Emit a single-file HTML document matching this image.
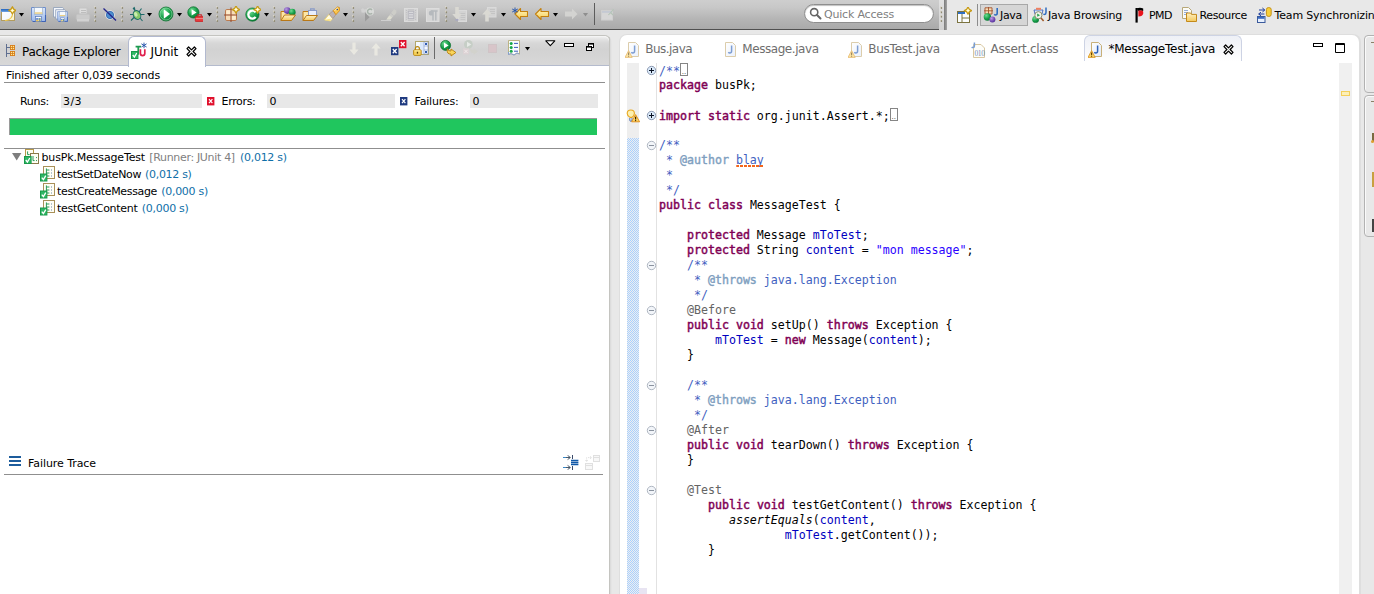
<!DOCTYPE html>
<html lang="en"><head><meta charset="utf-8"><title>Java - Eclipse</title>
<style>
html,body{margin:0;padding:0}
body{width:1374px;height:594px;overflow:hidden;background:#e8e8e8;position:relative;font-family:"DejaVu Sans","Liberation Sans",sans-serif;font-size:11px;color:#000;-webkit-font-smoothing:antialiased}
div,span,svg{position:absolute;box-sizing:border-box}
.t{white-space:pre;line-height:14px;height:14px}
.t12{font-size:12px}
.code{font-family:"DejaVu Sans Mono","Liberation Mono",monospace;font-size:11.627px;line-height:15px;height:15px;white-space:pre;left:659px;color:#000}
.code span{position:static}
.t span{position:static}
.k{color:#7f0055;-webkit-text-stroke:.45px #7f0055}
.c{color:#3f5fbf}
.g{color:#7f9fbf;-webkit-text-stroke:.4px #7f9fbf}
.f{color:#0000c0}
.s{color:#2a00ff}
.a{color:#646464}
.i{font-style:italic}
.sep{width:2px;height:15px;top:7px;background:linear-gradient(to right,#9c927a 0,#9c927a 1px,#d9d5c8 1px,#d9d5c8 2px);-webkit-mask:repeating-linear-gradient(to bottom,#000 0,#000 2px,transparent 2px,transparent 4px);mask:repeating-linear-gradient(to bottom,#000 0,#000 2px,transparent 2px,transparent 4px)}
.dd{width:0;height:0;border-left:3px solid transparent;border-right:3px solid transparent;border-top:4px solid #000;top:13px}
</style></head>
<body>
<!-- main toolbar -->
<div style="left:0px;top:0px;width:939px;height:30px;background:linear-gradient(to bottom,#cecece 0,#c8c8c8 25%,#b5b5b5 65%,#aaaaaa 100%);border-bottom:1px solid #505050"></div>
<div style="left:939px;top:0px;width:5px;height:30px;background:linear-gradient(to bottom,#e2e2e2,#d2d2d2)"></div>
<div style="left:944px;top:0px;width:3px;height:30px;background:linear-gradient(to right,#7a7a7a,#a6a6a6)"></div>
<svg width="0" height="0" style="left:0;top:0"><defs>
<linearGradient id="gGreen" x1="0" y1="0" x2="0" y2="1"><stop offset="0" stop-color="#3fc26a"/><stop offset="1" stop-color="#0a7d33"/></linearGradient>
<radialGradient id="gBall" cx=".35" cy=".3" r=".8"><stop offset="0" stop-color="#6fdc92"/><stop offset=".55" stop-color="#17a04a"/><stop offset="1" stop-color="#067230"/></radialGradient>
<radialGradient id="gBallP" cx=".35" cy=".3" r=".8"><stop offset="0" stop-color="#b89ce2"/><stop offset=".55" stop-color="#7a50b8"/><stop offset="1" stop-color="#4a2a90"/></radialGradient>
<linearGradient id="gFolder" x1="0" y1="0" x2="0" y2="1"><stop offset="0" stop-color="#fff2c4"/><stop offset="1" stop-color="#f3c85c"/></linearGradient>
<linearGradient id="gYel" x1="0" y1="0" x2="0" y2="1"><stop offset="0" stop-color="#fff6c8"/><stop offset="1" stop-color="#f7cf50"/></linearGradient>
<linearGradient id="gFloppy" x1="0" y1="0" x2="0" y2="1"><stop offset="0" stop-color="#dbe7fa"/><stop offset="1" stop-color="#9db9ea"/></linearGradient>
<linearGradient id="gWin" x1="0" y1="0" x2="1" y2="1"><stop offset="0" stop-color="#ffffff"/><stop offset=".6" stop-color="#f4f8ff"/><stop offset="1" stop-color="#fff1b0"/></linearGradient>
<linearGradient id="gJfile" x1="0" y1="0" x2="1" y2="1"><stop offset="0" stop-color="#ffffff"/><stop offset="1" stop-color="#dfe9fb"/></linearGradient>
</defs></svg>
<svg style="left:0px;top:6px" width="16" height="16" viewBox="0 0 16 16"><rect x="1.5" y="3.5" width="13" height="11" fill="url(#gWin)" stroke="#b39c5e"/><rect x="1" y="3" width="9.6" height="2.8" fill="#2f6fc4"/><rect x="1" y="4.6" width="9.6" height="1.2" fill="#6aa0e0"/><path d="M12.6 6 C13 11 10 14 5 14.6" fill="none" stroke="#ecc850" stroke-width="1.1"/><path d="M12.40 0.80 L13.70 3.10 L16.00 4.40 L13.70 5.70 L12.40 8.00 L11.10 5.70 L8.80 4.40 L11.10 3.10 Z" fill="#fff6b0" stroke="#c79a18" stroke-width="1.3" stroke-linejoin="round"/><circle cx="12.4" cy="4.4" r="1" fill="#fffce8"/></svg>
<svg style="left:19px;top:13px" width="5" height="4" viewBox="0 0 5 4"><path d="M0 0 H5 L2.5 3.6 Z" fill="#000"/></svg>
<svg style="left:31px;top:7px" width="16" height="16" viewBox="0 0 16 16"><g transform="translate(0 0) scale(1)"><path d="M.5 .5 H14.5 V14.5 H2 L.5 13 Z" fill="url(#gFloppy)" stroke="#6f8ecb"/><path d="M1.6 14.5 H14.6 M14.5 8 V14.5" stroke="#3f63b5" stroke-width="1.1" fill="none"/><rect x="3.3" y=".7" width="8.4" height="6.5" fill="#f5f9fe" stroke="#8da3bb" stroke-width=".6"/><rect x="3.7" y="5.3" width="7.6" height="1.5" fill="#ecd084"/><rect x="4.6" y="9.4" width="5.8" height="5" fill="#fbfcff" stroke="#5877b9" stroke-width=".7"/><rect x="5.1" y="11.2" width="2.5" height="1.6" fill="#4c7bcb"/><rect x="5.1" y="12.8" width="2.5" height="1.6" fill="#e9c152"/><rect x="8.1" y="11" width="1.5" height="3.4" fill="#7c9b7a"/></g></svg>
<svg style="left:53px;top:7px" width="16" height="16" viewBox="0 0 16 16"><path d="M.5 .5 H9.6 L10.4 1.4 V10 H.5 Z" fill="#f4f7fc" stroke="#8c9cb6" stroke-width=".8"/><path d="M2.7 2.7 H11.8 L12.6 3.6 V12 H2.7 Z" fill="#f4f7fc" stroke="#8c9cb6" stroke-width=".8"/><g transform="translate(4.3 4.3) scale(0.7)"><path d="M.5 .5 H14.5 V14.5 H2 L.5 13 Z" fill="url(#gFloppy)" stroke="#6f8ecb"/><path d="M1.6 14.5 H14.6 M14.5 8 V14.5" stroke="#3f63b5" stroke-width="1.1" fill="none"/><rect x="3.3" y=".7" width="8.4" height="6.5" fill="#f5f9fe" stroke="#8da3bb" stroke-width=".6"/><rect x="3.7" y="5.3" width="7.6" height="1.5" fill="#ecd084"/><rect x="4.6" y="9.4" width="5.8" height="5" fill="#fbfcff" stroke="#5877b9" stroke-width=".7"/><rect x="5.1" y="11.2" width="2.5" height="1.6" fill="#4c7bcb"/><rect x="5.1" y="12.8" width="2.5" height="1.6" fill="#e9c152"/><rect x="8.1" y="11" width="1.5" height="3.4" fill="#7c9b7a"/></g></svg>
<svg style="left:75px;top:7px" width="16" height="16" viewBox="0 0 16 16"><g opacity=".8"><rect x="4" y="1" width="8" height="7" fill="#e4e4e4" stroke="#c4c4c4"/><rect x="1" y="7" width="14" height="6" rx="1" fill="#d0d0d0" stroke="#bcbcbc"/><rect x="2" y="12" width="12" height="2.5" fill="#dadada"/><path d="M6 3.5h5M6 5.5h5" stroke="#bdbdbd"/></g></svg>
<svg style="left:94px;top:6px" width="3" height="17" viewBox="0 0 3 17"><rect x="0" y="0.20" width="1.3" height="1.7" fill="#dcd8ca"/><rect x=".8" y="1.10" width="1.3" height="1.8" fill="#8f8a72"/><rect x="0" y="4.55" width="1.3" height="1.7" fill="#dcd8ca"/><rect x=".8" y="5.45" width="1.3" height="1.8" fill="#8f8a72"/><rect x="0" y="8.90" width="1.3" height="1.7" fill="#dcd8ca"/><rect x=".8" y="9.80" width="1.3" height="1.8" fill="#8f8a72"/><rect x="0" y="13.25" width="1.3" height="1.7" fill="#dcd8ca"/><rect x=".8" y="14.15" width="1.3" height="1.8" fill="#8f8a72"/></svg>
<svg style="left:102px;top:7px" width="16" height="16" viewBox="0 0 16 16"><circle cx="8" cy="8" r="4.6" fill="#fff"/><circle cx="8" cy="8" r="3.7" fill="#4e8fd0" stroke="#2c62a8" stroke-width=".8"/><path d="M1.5 1.5 L14 13.5" stroke="#23238a" stroke-width="1.3"/></svg>
<svg style="left:121px;top:6px" width="3" height="17" viewBox="0 0 3 17"><rect x="0" y="0.20" width="1.3" height="1.7" fill="#dcd8ca"/><rect x=".8" y="1.10" width="1.3" height="1.8" fill="#8f8a72"/><rect x="0" y="4.55" width="1.3" height="1.7" fill="#dcd8ca"/><rect x=".8" y="5.45" width="1.3" height="1.8" fill="#8f8a72"/><rect x="0" y="8.90" width="1.3" height="1.7" fill="#dcd8ca"/><rect x=".8" y="9.80" width="1.3" height="1.8" fill="#8f8a72"/><rect x="0" y="13.25" width="1.3" height="1.7" fill="#dcd8ca"/><rect x=".8" y="14.15" width="1.3" height="1.8" fill="#8f8a72"/></svg>
<svg style="left:129px;top:6px" width="16" height="16" viewBox="0 0 16 16"><g stroke="#1d6a6a" stroke-width="1.1" fill="none"><path d="M4 2 L7 6 M12.5 2.5 L10 6 M1 8.5 L5 8.5 M11 8.5 L15.5 8.5 M2 14.5 L5.5 11 M13.5 15 L10.5 11.5 M5 1 L6 4"/></g><ellipse cx="8" cy="9" rx="3.6" ry="4.6" fill="#86c96a" stroke="#1d6a6a" transform="rotate(-25 8 9)"/><ellipse cx="7.2" cy="8" rx="1.6" ry="2.4" fill="#c8ecb0" transform="rotate(-25 8 9)"/></svg>
<svg style="left:147px;top:13px" width="5" height="4" viewBox="0 0 5 4"><path d="M0 0 H5 L2.5 3.6 Z" fill="#000"/></svg>
<svg style="left:158px;top:6px" width="16" height="16" viewBox="0 0 16 16"><circle cx="8" cy="8" r="7" fill="url(#gBall)" stroke="#0a6e2c" stroke-width=".8"/><circle cx="8" cy="8" r="6" fill="none" stroke="#a8eabc" stroke-width=".7" opacity=".8"/><path d="M5.8 3.2 L12 8 L5.8 12.8 Z" fill="#fff"/></svg>
<svg style="left:177px;top:13px" width="5" height="4" viewBox="0 0 5 4"><path d="M0 0 H5 L2.5 3.6 Z" fill="#000"/></svg>
<svg style="left:187px;top:6px" width="16" height="16" viewBox="0 0 16 16"><circle cx="6.4" cy="6.4" r="5.6" fill="url(#gBall)" stroke="#0a6e2c" stroke-width=".8"/><path d="M4.6 3.2 L9.6 6.4 L4.6 9.6 Z" fill="#fff"/><rect x="8.3" y="10.3" width="8.4" height="5.4" rx="1" fill="#e8383a" stroke="#b81e22" stroke-width=".7"/><path d="M10.7 10.2 v-1.4 h3.6 v1.4" fill="none" stroke="#c42a2c" stroke-width="1.1"/><path d="M8.6 12.6 h7.8" stroke="#f6a0a0" stroke-width=".8"/></svg>
<svg style="left:207px;top:13px" width="5" height="4" viewBox="0 0 5 4"><path d="M0 0 H5 L2.5 3.6 Z" fill="#000"/></svg>
<svg style="left:216px;top:6px" width="3" height="17" viewBox="0 0 3 17"><rect x="0" y="0.20" width="1.3" height="1.7" fill="#dcd8ca"/><rect x=".8" y="1.10" width="1.3" height="1.8" fill="#8f8a72"/><rect x="0" y="4.55" width="1.3" height="1.7" fill="#dcd8ca"/><rect x=".8" y="5.45" width="1.3" height="1.8" fill="#8f8a72"/><rect x="0" y="8.90" width="1.3" height="1.7" fill="#dcd8ca"/><rect x=".8" y="9.80" width="1.3" height="1.8" fill="#8f8a72"/><rect x="0" y="13.25" width="1.3" height="1.7" fill="#dcd8ca"/><rect x=".8" y="14.15" width="1.3" height="1.8" fill="#8f8a72"/></svg>
<svg style="left:224px;top:6px" width="16" height="16" viewBox="0 0 16 16"><rect x="1.5" y="3.5" width="11" height="11" rx="1.4" fill="#f6dcb8" stroke="#bc7c50"/><path d="M7 1.5 V16 M0 9 H13" stroke="#94482c" stroke-width="1"/><rect x="2.4" y="4.4" width="3.6" height="3.6" fill="#fdeccc"/><rect x="8" y="10" width="3.6" height="3.6" fill="#fdeccc"/><path d="M12.00 0.00 L13.30 2.30 L15.60 3.60 L13.30 4.90 L12.00 7.20 L10.70 4.90 L8.40 3.60 L10.70 2.30 Z" fill="#fff6b0" stroke="#c79a18" stroke-width="1.3" stroke-linejoin="round"/><circle cx="12" cy="3.6" r="1" fill="#fffce8"/></svg>
<svg style="left:245px;top:6px" width="16" height="16" viewBox="0 0 16 16"><circle cx="7.4" cy="8.6" r="6.7" fill="url(#gBall)" stroke="#0a6e2c" stroke-width=".6"/><path d="M10.6 6.3 A4 4 0 1 0 10.6 10.9" fill="none" stroke="#fff" stroke-width="2.3"/><path d="M12.60 0.00 L13.90 2.30 L16.20 3.60 L13.90 4.90 L12.60 7.20 L11.30 4.90 L9.00 3.60 L11.30 2.30 Z" fill="#fff6b0" stroke="#c79a18" stroke-width="1.3" stroke-linejoin="round"/><circle cx="12.6" cy="3.6" r="1" fill="#fffce8"/></svg>
<svg style="left:264px;top:13px" width="5" height="4" viewBox="0 0 5 4"><path d="M0 0 H5 L2.5 3.6 Z" fill="#000"/></svg>
<svg style="left:273px;top:6px" width="3" height="17" viewBox="0 0 3 17"><rect x="0" y="0.20" width="1.3" height="1.7" fill="#dcd8ca"/><rect x=".8" y="1.10" width="1.3" height="1.8" fill="#8f8a72"/><rect x="0" y="4.55" width="1.3" height="1.7" fill="#dcd8ca"/><rect x=".8" y="5.45" width="1.3" height="1.8" fill="#8f8a72"/><rect x="0" y="8.90" width="1.3" height="1.7" fill="#dcd8ca"/><rect x=".8" y="9.80" width="1.3" height="1.8" fill="#8f8a72"/><rect x="0" y="13.25" width="1.3" height="1.7" fill="#dcd8ca"/><rect x=".8" y="14.15" width="1.3" height="1.8" fill="#8f8a72"/></svg>
<svg style="left:280px;top:6px" width="16" height="16" viewBox="0 0 16 16"><path d="M1 5.5 H6 L7 7 H11 V14.5 H1 Z" fill="#fbe6a6" stroke="#c27c14"/><circle cx="7.2" cy="4.6" r="3.3" fill="url(#gBallP)"/><circle cx="12.2" cy="6.2" r="3.4" fill="url(#gBall)"/><path d="M1 14.5 L4.5 9 H15.5 L11.5 14.5 Z" fill="url(#gFolder)" stroke="#b87818"/></svg>
<svg style="left:302px;top:6px" width="16" height="16" viewBox="0 0 16 16"><path d="M1 5.5 H6 L7 7 H11 V14.5 H1 Z" fill="#fbe6a6" stroke="#c27c14"/><rect x="6.5" y="4.5" width="8" height="6" fill="#e8eefc" stroke="#8a9cc8"/><path d="M8.6 4.4 v-1.6 h3.6 v1.6" fill="none" stroke="#8a9cc8" stroke-width="1.2"/><path d="M1 14.5 L4.5 9.5 H15.5 L11.5 14.5 Z" fill="url(#gFolder)" stroke="#b87818"/></svg>
<svg style="left:324px;top:6px" width="16" height="16" viewBox="0 0 16 16"><path d="M5.2 8.2 L8.8 12.6 L6.4 14.9 L.5 13.9 Z" fill="#fffbe2" stroke="#f5d766" stroke-width=".8" stroke-linejoin="round"/><path d="M1.6 13.6 L6 14.4 L7.6 12.6 Z" fill="#fbe588"/><path d="M5.2 8.2 L9.2 4.6 L11.9 8.6 L8.8 12.6 Z" fill="#bab2b6" stroke="#a08c7c" stroke-width=".6" stroke-linejoin="round"/><path d="M9.2 4.6 L13.6 .9 L15.6 1.7 L15.5 4.7 L11.9 8.6 Z" fill="#f9c64e" stroke="#d98e1a" stroke-width=".9" stroke-linejoin="round"/><path d="M10.4 4.6 L13.8 1.8" stroke="#fde9a8" stroke-width="1.2"/><circle cx="13.3" cy="3.5" r=".8" fill="#27449c"/></svg>
<svg style="left:343px;top:13px" width="5" height="4" viewBox="0 0 5 4"><path d="M0 0 H5 L2.5 3.6 Z" fill="#000"/></svg>
<svg style="left:352px;top:6px" width="3" height="17" viewBox="0 0 3 17"><rect x="0" y="0.20" width="1.3" height="1.7" fill="#dcd8ca"/><rect x=".8" y="1.10" width="1.3" height="1.8" fill="#8f8a72"/><rect x="0" y="4.55" width="1.3" height="1.7" fill="#dcd8ca"/><rect x=".8" y="5.45" width="1.3" height="1.8" fill="#8f8a72"/><rect x="0" y="8.90" width="1.3" height="1.7" fill="#dcd8ca"/><rect x=".8" y="9.80" width="1.3" height="1.8" fill="#8f8a72"/><rect x="0" y="13.25" width="1.3" height="1.7" fill="#dcd8ca"/><rect x=".8" y="14.15" width="1.3" height="1.8" fill="#8f8a72"/></svg>
<svg style="left:360px;top:7px" width="16" height="16" viewBox="0 0 16 16"><path d="M1 2.6 L3 1 L4.4 2.4 L6.4 1.8 L6 4.4 L4 5.8 L1.6 5.4 Z" fill="#d2d2d2"/><circle cx="10" cy="4.6" r="4" fill="#d9dbd9"/><path d="M12 3 A2.5 2.5 0 1 0 12 6.2" fill="none" stroke="#a9b3ab" stroke-width="1.5"/><path d="M5 5.6 V14.6 L9.6 10.2 Z" fill="#9b9b9b"/></svg>
<svg style="left:381px;top:7px" width="16" height="16" viewBox="0 0 16 16"><path d="M0 13.5 H10" stroke="#cfcfcf"/><path d="M5.4 12.4 L13 2 L15.4 3.6 L15.4 6 L9.4 12.6 Z" fill="#cdcdc8"/><path d="M5.4 12.4 L8.4 8.4 L11 10.6 L9.4 12.6 Z" fill="#deddd0"/><path d="M10 6.4 L12.8 8.8" stroke="#bdbdbd" stroke-width=".8"/></svg>
<svg style="left:404px;top:7px" width="16" height="16" viewBox="0 0 16 16"><rect x=".5" y="1.5" width="13" height="13" fill="#d4d4d4" stroke="#dcdcdc"/><rect x="4.2" y="4.2" width="5.6" height="7.4" fill="#d9d9dc" stroke="#b3b3bb" stroke-width=".9"/><path d="M5 6.6 h4 M5 9 h4" stroke="#b3b3bb" stroke-width=".9"/><path d="M2.4 3v11M11.6 3v11" stroke="#bcbcc0" stroke-width="1" stroke-dasharray="1 1.2"/><path d="M4 2.8h6M4 13.2h6" stroke="#bcbcc0" stroke-width=".8"/></svg>
<svg style="left:425px;top:7px" width="16" height="16" viewBox="0 0 16 16"><rect x="1.5" y="1.5" width="12.5" height="13" fill="#d6d6d6" stroke="#dddddd"/><path d="M8 4 V13.4 M10.8 4 V13.4 M6 4 H12.6" stroke="#b5b9bd" stroke-width="1.5" fill="none"/><path d="M8 3.4 H6.4 Q3.8 3.4 3.8 6 Q3.8 8.6 6.4 8.6 H8 Z" fill="#b5b9bd"/></svg>
<svg style="left:445px;top:6px" width="3" height="17" viewBox="0 0 3 17"><rect x="0" y="0.20" width="1.3" height="1.7" fill="#dcd8ca"/><rect x=".8" y="1.10" width="1.3" height="1.8" fill="#8f8a72"/><rect x="0" y="4.55" width="1.3" height="1.7" fill="#dcd8ca"/><rect x=".8" y="5.45" width="1.3" height="1.8" fill="#8f8a72"/><rect x="0" y="8.90" width="1.3" height="1.7" fill="#dcd8ca"/><rect x=".8" y="9.80" width="1.3" height="1.8" fill="#8f8a72"/><rect x="0" y="13.25" width="1.3" height="1.7" fill="#dcd8ca"/><rect x=".8" y="14.15" width="1.3" height="1.8" fill="#8f8a72"/></svg>
<svg style="left:452px;top:6px" width="16" height="16" viewBox="0 0 16 16"><rect x="6.5" y="4.5" width="8" height="11" fill="#d3d3d3" stroke="#dadada"/><path d="M8.6 7.5h4.6M8.6 9.5h4.6M8.6 11.5h4.6M8.6 13.5h4.6" stroke="#c2c2c2" stroke-width=".9"/><path d="M3.2 1 H6.8 V8 H9.8 L5 13.4 L.2 8 H3.2 Z" fill="#dad9d3"/><rect x="3.4" y="13" width="3" height="1.8" fill="#a9a9c0"/></svg>
<svg style="left:471px;top:13px" width="5" height="4" viewBox="0 0 5 4"><path d="M0 0 H5 L2.5 3.6 Z" fill="#000"/></svg>
<svg style="left:482px;top:6px" width="16" height="16" viewBox="0 0 16 16"><rect x="5.5" y="1.5" width="8.5" height="9.5" fill="#d3d3d3" stroke="#dadada"/><path d="M8 3.5h5M8 5.5h5M8 7.5h5" stroke="#c2c2c2" stroke-width=".9"/><path d="M3.2 15.4 H6.8 V8.6 H9.8 L5 3 L.2 8.6 H3.2 Z" fill="#dad9d3"/></svg>
<svg style="left:501px;top:13px" width="5" height="4" viewBox="0 0 5 4"><path d="M0 0 H5 L2.5 3.6 Z" fill="#000"/></svg>
<svg style="left:512px;top:7px" width="16" height="16" viewBox="0 0 16 16"><path d="M8.5 1.5 L3 7 L8.5 12.5 V9.5 H15.5 V4.5 H8.5 Z" fill="url(#gYel)" stroke="#c4800e" stroke-width="1.1" stroke-linejoin="round"/><path d="M3 .5 V6.5 M.2 2 L5.8 5 M.2 5 L5.8 2" stroke="#1e4fa8" stroke-width=".9"/></svg>
<svg style="left:534px;top:7px" width="16" height="16" viewBox="0 0 16 16"><path d="M7 1.5 L1.5 7 L7 12.5 V9.5 H14.5 V4.5 H7 Z" fill="url(#gYel)" stroke="#c4800e" stroke-width="1.1" stroke-linejoin="round"/></svg>
<svg style="left:553px;top:13px" width="5" height="4" viewBox="0 0 5 4"><path d="M0 0 H5 L2.5 3.6 Z" fill="#000"/></svg>
<svg style="left:564px;top:7px" width="16" height="16" viewBox="0 0 16 16"><path d="M8 1.5 L13.5 7 L8 12.5 V9.5 H1 V4.5 H8 Z" fill="#d3d3d1"/></svg>
<svg style="left:583px;top:13px" width="5" height="4" viewBox="0 0 5 4"><path d="M0 0 H5 L2.5 3.6 Z" fill="#8e8e8e"/></svg>
<div style="left:594px;top:3px;width:1px;height:22px;background:#5c5c5c"></div>
<svg style="left:600px;top:7px" width="16" height="16" viewBox="0 0 16 16"><rect x="1.5" y="3.5" width="11" height="9.5" fill="#d6d6d6" stroke="#cfcfcf"/><rect x="2" y="4" width="10" height="1.8" fill="#c4c9d3"/><path d="M8.4 8 L13.6 2.4 M10.4 5.4 l2.6 2.6" stroke="#b4c4b6" stroke-width="1.1"/></svg>
<svg style="left:940px;top:6px" width="3" height="17" viewBox="0 0 3 17"><rect x="0" y="0.20" width="1.3" height="1.7" fill="#dcd8ca"/><rect x=".8" y="1.10" width="1.3" height="1.8" fill="#8f8a72"/><rect x="0" y="4.55" width="1.3" height="1.7" fill="#dcd8ca"/><rect x=".8" y="5.45" width="1.3" height="1.8" fill="#8f8a72"/><rect x="0" y="8.90" width="1.3" height="1.7" fill="#dcd8ca"/><rect x=".8" y="9.80" width="1.3" height="1.8" fill="#8f8a72"/><rect x="0" y="13.25" width="1.3" height="1.7" fill="#dcd8ca"/><rect x=".8" y="14.15" width="1.3" height="1.8" fill="#8f8a72"/></svg>
<div style="left:804px;top:4px;width:130px;height:19px;background:#fff;border:1px solid #8e8e8e;border-radius:10px;box-shadow:inset 0 1px 1px rgba(0,0,0,.25)"></div>
<svg style="left:809px;top:7px" width="13" height="13" viewBox="0 0 13 13"><circle cx="5.2" cy="5.2" r="3.6" fill="none" stroke="#666" stroke-width="1.6"/><path d="M8 8 L11.5 11.5" stroke="#666" stroke-width="2" stroke-linecap="round"/></svg>
<div class="t" style="left:824px;top:8.20px;color:#808080;letter-spacing:-0.189px;">Quick Access</div>
<!-- perspective bar -->
<svg style="left:956px;top:7px" width="16" height="16" viewBox="0 0 16 16"><rect x="1.5" y="4.5" width="12" height="11" fill="#fbfdff" stroke="#7c7440"/><rect x="2" y="5" width="7" height="2" fill="#2f6fc4"/><path d="M6 7 V15 M6 11 H13.5" stroke="#7c7440"/><path d="M12.00 0.00 L13.30 2.30 L15.60 3.60 L13.30 4.90 L12.00 7.20 L10.70 4.90 L8.40 3.60 L10.70 2.30 Z" fill="#fff6b0" stroke="#c79a18" stroke-width="1.3" stroke-linejoin="round"/><circle cx="12" cy="3.6" r="1" fill="#fffce8"/></svg>
<svg style="left:983px;top:7px;z-index:3" width="16" height="16" viewBox="0 0 16 16"><path d="M2 .8 H9 V7 H2 Z" fill="#f6dcb6" stroke="#a4532c" stroke-width=".9"/><path d="M5.5 0 V8 M1 3.8 H10" stroke="#a4532c" stroke-width=".9"/><circle cx="4.4" cy="10" r="3.7" fill="url(#gBall)"/><circle cx="9.4" cy="12.6" r="3" fill="url(#gBallP)"/><path d="M14.2 1 V6 Q14.2 8 12.6 8 Q11.8 8 11.2 7.4" fill="none" stroke="#2f6cc0" stroke-width="1.6"/></svg>
<svg style="left:1031px;top:7px" width="16" height="16" viewBox="0 0 16 16"><path d="M3 3 H12 L11 7 H4 Z" fill="#dfeafc" stroke="#2f55b0" stroke-width=".8"/><rect x="5" y=".8" width="5" height="2" fill="#f08060"/><circle cx="4.6" cy="12.4" r="3.4" fill="url(#gBall)"/><circle cx="7.4" cy="8.2" r="3.6" fill="#eef6ea" stroke="#8a8a70" stroke-width="1"/><path d="M6.2 6.6 L9 8.2 L6.2 9.8 Z" fill="#2aa050"/><path d="M10 11 L12.6 14" stroke="#a05a2a" stroke-width="1.5"/><path d="M15 .6 V5.6 Q15 7.4 13.6 7.4 Q12.8 7.4 12.4 6.9" fill="none" stroke="#2f6cc0" stroke-width="1.5"/></svg>
<svg style="left:1134px;top:7px" width="16" height="16" viewBox="0 0 16 16"><path d="M2.6 1 V15.6" stroke="#000" stroke-width="2.2"/><path d="M2.6 1.4 Q6 .2 9.2 1.4 V4 Q6.4 3 4.4 4" fill="#000"/><path d="M4.4 3.6 H7.6 Q9.6 3.6 9.2 6.6 Q8.8 9.4 4.4 9.6 Z" fill="#e8141c"/></svg>
<svg style="left:1182px;top:7px" width="16" height="16" viewBox="0 0 16 16"><path d="M.5 .5 H6.5 L9.5 3.5 V11.5 H.5 Z" fill="#fbfbf6" stroke="#b8a878"/><path d="M2 3.5h4M2 5.5h4M2 7.5h3" stroke="#7c9ad0" stroke-width=".8"/><path d="M4.5 6 H8.6 L9.6 7.4 H14.5 V14.5 H4.5 Z" fill="url(#gFolder)" stroke="#c48a1a"/></svg>
<svg style="left:1257px;top:7px" width="16" height="16" viewBox="0 0 16 16"><rect x="9.4" y=".6" width="4.8" height="8.8" rx="2" fill="#f8cf3a" stroke="#c08a10" stroke-width=".9"/><rect x=".5" y="9.5" width="7.5" height="6" fill="#e8f0fc" stroke="#3a5a9c"/><rect x="1" y="10" width="6.5" height="1.8" fill="#3a6cc4"/><path d="M2 3 H7.4 M5.4 1 L7.8 3 L5.4 5 M7.4 7 H2 M4 5.2 L1.6 7 L4 8.8" fill="none" stroke="#1e3c9a" stroke-width="1"/></svg>
<div style="left:977px;top:4px;width:1px;height:22px;background:#8c8c8c"></div>
<div style="left:980px;top:4px;width:48px;height:22px;background:#d6d6d6;border:1px solid #a8a8a8"></div>
<div class="t" style="left:1000px;top:9.20px;letter-spacing:-0.312px;">Java</div>
<div class="t" style="left:1048px;top:9.20px;letter-spacing:-0.233px;">Java Browsing</div>
<div class="t" style="left:1149px;top:9.20px;letter-spacing:-0.536px;">PMD</div>
<div class="t" style="left:1199.5px;top:9.20px;letter-spacing:-0.394px;">Resource</div>
<div class="t" style="left:1274.5px;top:9.20px;letter-spacing:-0.161px;">Team Synchronizing</div>
<!-- JUnit view -->
<div style="left:0px;top:35px;width:612px;height:560px;background:linear-gradient(to right,#c4c4c0 0,#c4c4c0 610px,#dcdcdc 610px,#dcdcdc 611px,#e4e4e4 611px);border-top-right-radius:8px"></div>
<div style="left:0px;top:35px;width:609px;height:560px;background:#fff;border-top-right-radius:5px;border-top:1px solid #c4c4c0"></div>
<div style="left:0px;top:36px;width:609px;height:30px;background:linear-gradient(to bottom,#eeeeee 0,#e3e3e3 8%,#d7d7d7 22%,#d2d2d2 45%,#d8d8d8 100%);border-top-right-radius:5px;border-bottom:1px solid #b4bbcd;border-top:1px solid #f4f4f4"></div>
<div style="left:127.5px;top:35.5px;width:78px;height:31px;background:#fff;border:1px solid #b2b9cf;border-bottom:none;border-radius:6px 6px 0 0"></div>
<svg style="left:5px;top:43px" width="11" height="15" viewBox="0 0 11 15"><path d="M1.5 1 V14 M1.5 4.5 H5 M1.5 10.5 H5" stroke="#5f6f90" stroke-width="1" fill="none"/><rect x="5" y="2" width="5" height="5" fill="#d67c1c"/><rect x="5" y="8" width="5" height="5" fill="#d67c1c"/><rect x="5.9" y="2.9" width="1.2" height="1.2" fill="#ffec90"/><rect x="5.9" y="4.9" width="1.2" height="1.2" fill="#ffec90"/><rect x="7.9" y="2.9" width="1.2" height="1.2" fill="#ffec90"/><rect x="7.9" y="4.9" width="1.2" height="1.2" fill="#ffec90"/><rect x="5.9" y="8.9" width="1.2" height="1.2" fill="#ffec90"/><rect x="5.9" y="10.9" width="1.2" height="1.2" fill="#ffec90"/><rect x="7.9" y="8.9" width="1.2" height="1.2" fill="#ffec90"/><rect x="7.9" y="10.9" width="1.2" height="1.2" fill="#ffec90"/></svg>
<svg style="left:131px;top:42px" width="17" height="17" viewBox="0 0 17 17"><rect x=".5" y="9.5" width="6.4" height="7" fill="#2fb765" stroke="#18994a"/><path d="M1.8 13 L3.4 15 L5.8 11" fill="none" stroke="#fff" stroke-width="1.3"/><path d="M4.6 4.6 H10 M7.3 4.6 V11.2 Q7.3 12.2 6.4 12.2" stroke="#1d9a50" stroke-width="1.8" fill="none"/><path d="M9.4 7.2 V11.6 Q9.4 13.6 11.6 13.6 Q13.8 13.6 13.8 11.6 V7.2" fill="none" stroke="#e0204c" stroke-width="1.7"/><path d="M13 .6 V6.2 M10.4 1.8 L15.6 5 M10.4 5 L15.6 1.8" stroke="#1e4fa8" stroke-width=".9"/></svg>
<svg style="left:185.5px;top:45.5px" width="11" height="11" viewBox="0 0 11 11"><path d="M2.6 1 L5.5 3.9 L8.4 1 L10 2.6 L7.1 5.5 L10 8.4 L8.4 10 L5.5 7.1 L2.6 10 L1 8.4 L3.9 5.5 L1 2.6 Z" fill="#fff" stroke="#000" stroke-width="1.25" stroke-linejoin="round"/></svg>
<svg style="left:349px;top:42px" width="10" height="14" viewBox="0 0 10 14"><path d="M3.4 .5 H6.6 V7.5 H9.6 L5 13 L.4 7.5 H3.4 Z" fill="#e9e8e1"/></svg>
<svg style="left:371px;top:42px" width="10" height="14" viewBox="0 0 10 14"><path d="M3.4 13.5 H6.6 V6.5 H9.6 L5 1 L.4 6.5 H3.4 Z" fill="#e9e8e1"/></svg>
<svg style="left:391px;top:40px" width="16" height="16" viewBox="0 0 16 16"><rect x="0" y="7" width="7.4" height="8.2" fill="#1f3a80"/><path d="M1.8 9 L5.6 13.2 M5.6 9 L1.8 13.2" stroke="#fff" stroke-width="1.3"/><rect x="8" y="0" width="7.4" height="8.2" fill="#e0102c"/><path d="M9.8 2 L13.6 6.2 M13.6 2 L9.8 6.2" stroke="#fff" stroke-width="1.3"/></svg>
<svg style="left:413px;top:40px" width="16" height="16" viewBox="0 0 16 16"><rect x="2.5" y="1.5" width="13" height="13" fill="#dbe9fb" stroke="#b3a76c"/><rect x="3" y="2" width="4" height="12" fill="#f4f9ff"/><rect x="11" y="2" width="4" height="12" fill="#f6f9ff" stroke="#7d95c9" stroke-width=".6"/><rect x="12" y="3" width="2" height="2" fill="#2f5cb0"/><rect x="12" y="11" width="2" height="2" fill="#2f5cb0"/><path d="M11 6 h4 M11 10 h4" stroke="#7d95c9" stroke-width=".6"/><rect x=".6" y="9.8" width="7.6" height="5.6" rx="1" fill="#f7d25a" stroke="#b8860e" stroke-width=".9"/><path d="M2.4 9.8 V8.6 Q2.4 6.6 4.4 6.6 Q6.4 6.6 6.4 8.6 V9.8" fill="none" stroke="#b8860e" stroke-width="1.2"/><rect x="3.8" y="11.6" width="1.3" height="2" fill="#5a4000"/><rect x="1.4" y="10.4" width="6" height="1" fill="#fdeea8"/></svg>
<div style="left:434px;top:37px;width:1px;height:22px;background:#6a6a6a"></div>
<svg style="left:440px;top:39px" width="17" height="18" viewBox="0 0 17 18"><circle cx="5.6" cy="6.4" r="5" fill="url(#gBall)" stroke="#0a6e2c" stroke-width=".7"/><path d="M4 3.6 L8.6 6.4 L4 9.2 Z" fill="#fff"/><path d="M7.4 9.8 Q8 12.2 11 12 V10 L15.9 13.5 L11 17 V15 Q6.4 15.6 7.4 9.8 Z" fill="#f9d55a" stroke="#b8800e" stroke-width=".9" stroke-linejoin="round"/></svg>
<svg style="left:462px;top:39px" width="17" height="18" viewBox="0 0 17 18"><circle cx="6.4" cy="5.4" r="4.4" fill="#c6cec6"/><path d="M5 2.8 L9.4 5.4 L5 8 Z" fill="#e6eae6"/><rect x="1" y="9.4" width="6" height="6" fill="#dcd2d4"/><path d="M2.4 10.8 L5.6 14 M5.6 10.8 L2.4 14" stroke="#f2ecec" stroke-width="1"/><path d="M8.4 8.8 Q9 11.4 11.6 11.2 V9.4 L16 12.6 L11.6 15.8 V14 Q7.6 14.4 8.4 8.8 Z" fill="#d2d2cc"/></svg>
<div style="left:488px;top:44px;width:9px;height:9px;background:#d8c5c9;border:1px solid #cfc4c6"></div>
<svg style="left:508px;top:40px" width="13" height="16" viewBox="0 0 13 16"><path d="M.5 .5 H11.5 V14 L9 13 L6 15 L3 13.6 L.5 14.5 Z" fill="#fbfdff" stroke="#b8ac78" stroke-width=".9"/><path d="M.5 12 V14.5 L3 13.6 L6 15 L9 13 L11.5 14" fill="none" stroke="#7c9cd8" stroke-width=".9"/><circle cx="3.2" cy="3.4" r="1.5" fill="#18a848"/><circle cx="3.2" cy="7.4" r="1.5" fill="#18a848"/><circle cx="3.2" cy="11.2" r="1.5" fill="#18a848"/><path d="M6 3.4h4M6 7.4h4M6 11.2h4" stroke="#3a5ab8" stroke-width="1"/></svg>
<svg style="left:525px;top:47px" width="5" height="4" viewBox="0 0 5 4"><path d="M0 0 H5 L2.5 3.6 Z" fill="#000"/></svg>
<svg style="left:545px;top:40px" width="11" height="7" viewBox="0 0 11 7"><path d="M.8 .8 H9.8 L5.3 5.6 Z" fill="#fff" stroke="#000" stroke-width="1.1" stroke-linejoin="round"/></svg>
<div style="left:564px;top:43px;width:10px;height:4px;background:#fff;border:1px solid #000"></div>
<svg style="left:586px;top:43px" width="9" height="9" viewBox="0 0 9 9"><rect x="2.5" y=".5" width="5" height="4" fill="#fff" stroke="#000" stroke-width="1"/><rect x="2" y="0" width="6" height="1.6" fill="#000"/><rect x=".5" y="3.5" width="5" height="4" fill="#fff" stroke="#000" stroke-width="1"/><rect x="0" y="3" width="6" height="1.6" fill="#000"/></svg>
<div class="t t12" style="left:22px;top:44.85px;letter-spacing:-0.314px;">Package Explorer</div>
<div class="t t12" style="left:150.5px;top:44.85px;letter-spacing:-0.094px;">JUnit</div>
<div class="t" style="left:6px;top:69.20px;letter-spacing:-0.144px;">Finished after 0,039 seconds</div>
<div style="left:4px;top:82px;width:601px;height:1px;background:#8f8f8f"></div>
<div class="t" style="left:20px;top:95.20px;letter-spacing:-0.306px;">Runs:</div>
<div style="left:61px;top:94px;width:141px;height:14px;background:#e8e8e8"></div>
<div class="t" style="left:63px;top:95.20px;letter-spacing:0.432px;">3/3</div>
<div class="t" style="left:221.5px;top:95.20px;letter-spacing:-0.321px;">Errors:</div>
<div style="left:267px;top:94px;width:128px;height:14px;background:#e8e8e8"></div>
<div class="t" style="left:269.5px;top:95.20px;">0</div>
<div class="t" style="left:414.5px;top:95.20px;letter-spacing:-0.182px;">Failures:</div>
<div style="left:470px;top:94px;width:128px;height:14px;background:#e8e8e8"></div>
<div class="t" style="left:472.5px;top:95.20px;">0</div>
<div style="left:9px;top:118px;width:588px;height:17px;background:#20c65e;border-top:1px solid #9a9a9a;border-left:1px solid #9a9a9a"></div>
<div style="left:4px;top:148px;width:601px;height:1px;background:#8f8f8f"></div>
<svg style="left:12px;top:153px" width="10" height="8" viewBox="0 0 10 8"><path d="M0 0 H9.4 L4.7 7.6 Z" fill="#7e7e7e"/></svg>
<div class="t" style="left:41.5px;top:151.20px;letter-spacing:-0.151px;">busPk.MessageTest</div>
<div class="t" style="left:149.2px;top:151.20px;color:#808080;letter-spacing:-0.322px;">[Runner: JUnit 4]</div>
<div class="t" style="left:240.1px;top:151.20px;color:#0f6fa8;letter-spacing:-0.301px;">(0,012 s)</div>
<div class="t" style="left:57px;top:168.20px;letter-spacing:-0.388px;">testSetDateNow</div>
<div class="t" style="left:145px;top:168.20px;color:#0f6fa8;letter-spacing:-0.301px;">(0,012 s)</div>
<div class="t" style="left:57px;top:185.20px;letter-spacing:-0.347px;">testCreateMessage</div>
<div class="t" style="left:161.2px;top:185.20px;color:#0f6fa8;letter-spacing:-0.279px;">(0,000 s)</div>
<div class="t" style="left:57px;top:202.20px;letter-spacing:-0.285px;">testGetContent</div>
<div class="t" style="left:141.8px;top:202.20px;color:#0f6fa8;letter-spacing:-0.279px;">(0,000 s)</div>
<svg style="left:207px;top:97px" width="8" height="9" viewBox="0 0 8 9"><rect x="0" y="0" width="7.4" height="8.4" fill="#e0102c"/><path d="M2 2.2 L5.4 6.2 M5.4 2.2 L2 6.2" stroke="#fff" stroke-width="1.2"/></svg>
<svg style="left:400px;top:97px" width="8" height="9" viewBox="0 0 8 9"><rect x="0" y="0" width="7.4" height="8.4" fill="#1f3a80"/><path d="M2 2.2 L5.4 6.2 M5.4 2.2 L2 6.2" stroke="#fff" stroke-width="1.2"/></svg>
<svg style="left:24px;top:149px" width="16" height="16" viewBox="0 0 16 16"><rect x="1.5" y=".5" width="8" height="9" fill="#fffef4" stroke="#b89a4a"/><path d="M3.6 2.4 V5.6 H5.6" fill="none" stroke="#2a9a58" stroke-width="1"/><rect x="6.5" y="4.5" width="8" height="10" fill="#fffef4" stroke="#8a7a4a"/><path d="M9 7 V11.6 H10.6 M12 8.6 h1 M12 11.6 h1" fill="none" stroke="#2a9a58" stroke-width="1"/><rect x=".5" y="7.5" width="6.6" height="7" fill="#2fb765" stroke="#18994a"/><path d="M1.8 11 L3.4 13 L5.8 9" fill="none" stroke="#fff" stroke-width="1.3"/></svg>
<svg style="left:40px;top:166px" width="16" height="16" viewBox="0 0 16 16"><rect x="3.5" y=".5" width="11" height="12" fill="#fffef6" stroke="#a89058"/><path d="M6.4 2.4 V10.4 M6.4 4 H9.4 M6.4 7 H9.4 M6.4 10 H9.4" fill="none" stroke="#2a9a58" stroke-width="1"/><path d="M11 4h2M11 7h2M11 10h2" stroke="#6a8aa8" stroke-width="1" stroke-dasharray="1 1"/><rect x=".5" y="8" width="6.4" height="7" fill="#2fb765" stroke="#18994a"/><path d="M1.8 11.6 L3.4 13.6 L5.8 9.6" fill="none" stroke="#fff" stroke-width="1.3"/></svg>
<svg style="left:40px;top:183px" width="16" height="16" viewBox="0 0 16 16"><rect x="3.5" y=".5" width="11" height="12" fill="#fffef6" stroke="#a89058"/><path d="M6.4 2.4 V10.4 M6.4 4 H9.4 M6.4 7 H9.4 M6.4 10 H9.4" fill="none" stroke="#2a9a58" stroke-width="1"/><path d="M11 4h2M11 7h2M11 10h2" stroke="#6a8aa8" stroke-width="1" stroke-dasharray="1 1"/><rect x=".5" y="8" width="6.4" height="7" fill="#2fb765" stroke="#18994a"/><path d="M1.8 11.6 L3.4 13.6 L5.8 9.6" fill="none" stroke="#fff" stroke-width="1.3"/></svg>
<svg style="left:40px;top:200px" width="16" height="16" viewBox="0 0 16 16"><rect x="3.5" y=".5" width="11" height="12" fill="#fffef6" stroke="#a89058"/><path d="M6.4 2.4 V10.4 M6.4 4 H9.4 M6.4 7 H9.4 M6.4 10 H9.4" fill="none" stroke="#2a9a58" stroke-width="1"/><path d="M11 4h2M11 7h2M11 10h2" stroke="#6a8aa8" stroke-width="1" stroke-dasharray="1 1"/><rect x=".5" y="8" width="6.4" height="7" fill="#2fb765" stroke="#18994a"/><path d="M1.8 11.6 L3.4 13.6 L5.8 9.6" fill="none" stroke="#fff" stroke-width="1.3"/></svg>
<svg style="left:563px;top:455px" width="16" height="15" viewBox="0 0 16 15"><path d="M0 2.5 H7 M4.6 .4 L7.4 2.5 L4.6 4.6 M0 12.5 H7 M4.6 10.4 L7.4 12.5 L4.6 14.6" fill="none" stroke="#4a5a6a" stroke-width="1"/><path d="M0 2.5 H3 M0 12.5 H3" stroke="#3a88c8" stroke-width="1"/><path d="M9.5 0 V4 M9.5 11 V15" stroke="#3a4a6a" stroke-width="1"/><path d="M8 5.5 H15.4 M8 7.5 H15.4 M8 9.5 H15.4" stroke="#1058a8" stroke-width="1.6"/></svg>
<svg style="left:585px;top:455px" width="16" height="16" viewBox="0 0 16 16"><g opacity=".55"><rect x="8.5" y=".5" width="6" height="6" fill="#f4f4f4" stroke="#c8c8c8"/><path d="M8.5 2.5h6" stroke="#c8c8c8"/><rect x=".5" y="8.5" width="7" height="6" fill="#f4f4f4" stroke="#c8c8c8"/><path d="M.5 10.500h7" stroke="#c8c8c8"/><path d="M1.6 6 V2.6 H6" fill="none" stroke="#c8c8c8" stroke-dasharray="1.4 1"/><path d="M5 1.4 L6.4 2.6 L5 3.8 M.4 5 L1.6 6.4 L2.8 5" fill="none" stroke="#c8c8c8"/></g></svg>
<div style="left:9px;top:456px;width:12px;height:2px;background:#1d5c9c"></div>
<div style="left:9px;top:460px;width:12px;height:2px;background:#1d5c9c"></div>
<div style="left:9px;top:464px;width:12px;height:2px;background:#1d5c9c"></div>
<div class="t" style="left:28px;top:457.20px;letter-spacing:-0.067px;">Failure Trace</div>
<div style="left:4px;top:474px;width:599px;height:1px;background:#8f8f8f"></div>
<!-- editor -->
<div style="left:619px;top:34px;width:742px;height:561px;background:#dedede;border-radius:8px 8px 0 0"></div>
<div style="left:620px;top:35px;width:739px;height:560px;background:#fff;border-radius:7px 7px 0 0"></div>
<div style="left:1084px;top:35px;width:157.5px;height:26px;background:linear-gradient(to bottom,#eef0f6 0,#f6f7fa 50%,#fff 100%);border:1px solid #cdd3e4;border-bottom:none;border-radius:6px 6px 0 0"></div>
<div class="t t12" style="left:645.3px;top:41.85px;color:#6e6e6e;letter-spacing:-0.543px;">Bus.java</div>
<div class="t t12" style="left:742.3px;top:41.85px;color:#6e6e6e;letter-spacing:-0.439px;">Message.java</div>
<div class="t t12" style="left:868.3px;top:41.85px;color:#6e6e6e;letter-spacing:-0.257px;">BusTest.java</div>
<div class="t t12" style="left:990.6px;top:41.85px;color:#6e6e6e;letter-spacing:-0.304px;">Assert.class</div>
<div class="t t12" style="left:1108.5px;top:41.85px;letter-spacing:-0.264px;">*MessageTest.java</div>
<svg style="left:625px;top:42px" width="16" height="16" viewBox="0 0 16 16"><g opacity=".62"><path d="M3.5 .5 H10.5 L13.5 3.5 V14.5 H3.5 Z" fill="url(#gJfile)" stroke="#c8b078"/><path d="M9.6 3.4 V9 Q9.6 11 7.8 11 Q6.8 11 6.4 10.2" fill="none" stroke="#2f62b8" stroke-width="1.5"/><path d="M3.6 8.6 L7.2 15.4 H0 Z" fill="#fbd56a" stroke="#d9901a" stroke-width=".8" stroke-linejoin="round"/><path d="M3.6 10.6 V13" stroke="#5a3a00" stroke-width="1.1"/><circle cx="3.6" cy="14.2" r=".6" fill="#5a3a00"/></g></svg>
<svg style="left:721.5px;top:42px" width="16" height="16" viewBox="0 0 16 16"><g opacity=".62"><path d="M3.5 .5 H10.5 L13.5 3.5 V14.5 H3.5 Z" fill="url(#gJfile)" stroke="#c8b078"/><path d="M9.6 3.4 V9 Q9.6 11 7.8 11 Q6.8 11 6.4 10.2" fill="none" stroke="#2f62b8" stroke-width="1.5"/></g></svg>
<svg style="left:848px;top:42px" width="16" height="16" viewBox="0 0 16 16"><g opacity=".62"><path d="M3.5 .5 H10.5 L13.5 3.5 V14.5 H3.5 Z" fill="url(#gJfile)" stroke="#c8b078"/><path d="M9.6 3.4 V9 Q9.6 11 7.8 11 Q6.8 11 6.4 10.2" fill="none" stroke="#2f62b8" stroke-width="1.5"/><path d="M3.6 8.6 L7.2 15.4 H0 Z" fill="#fbd56a" stroke="#d9901a" stroke-width=".8" stroke-linejoin="round"/><path d="M3.6 10.6 V13" stroke="#5a3a00" stroke-width="1.1"/><circle cx="3.6" cy="14.2" r=".6" fill="#5a3a00"/></g></svg>
<svg style="left:971px;top:41.5px" width="16" height="16" viewBox="0 0 16 16"><g opacity=".7"><path d="M2.5 2.5 H10 L13.5 6 V15.5 H2.5 Z" fill="#fdfdf8" stroke="#c8b078"/><path d="M3.4 .4 V4 Q3.4 5.6 2 5.6 Q1.2 5.6 .8 5" fill="none" stroke="#3f74c4" stroke-width="1.5"/><text x="3.4" y="14" font-family="Liberation Serif,serif" font-size="7.5" fill="#3a5a9c" textLength="10.5">010</text></g></svg>
<svg style="left:1088px;top:42px" width="16" height="16" viewBox="0 0 16 16"><g><path d="M3.5 .5 H10.5 L13.5 3.5 V14.5 H3.5 Z" fill="url(#gJfile)" stroke="#c8b078"/><path d="M9.6 3.4 V9 Q9.6 11 7.8 11 Q6.8 11 6.4 10.2" fill="none" stroke="#2f62b8" stroke-width="1.5"/><path d="M3.6 8.6 L7.2 15.4 H0 Z" fill="#fbd56a" stroke="#d9901a" stroke-width=".8" stroke-linejoin="round"/><path d="M3.6 10.6 V13" stroke="#5a3a00" stroke-width="1.1"/><circle cx="3.6" cy="14.2" r=".6" fill="#5a3a00"/></g></svg>
<svg style="left:1222.5px;top:43.5px" width="11" height="11" viewBox="0 0 11 11"><path d="M2.6 1 L5.5 3.9 L8.4 1 L10 2.6 L7.1 5.5 L10 8.4 L8.4 10 L5.5 7.1 L2.6 10 L1 8.4 L3.9 5.5 L1 2.6 Z" fill="#fff" stroke="#000" stroke-width="1.25" stroke-linejoin="round"/></svg>
<div style="left:1313px;top:43px;width:10px;height:4px;background:#fff;border:1px solid #000"></div>
<div style="left:1335px;top:43px;width:10px;height:10px;background:#fff;border:1px solid #000;border-top-width:2px;border-radius:1px"></div>
<div style="left:627px;top:63px;width:12px;height:531px;background:#eeeeee"></div>
<div style="left:627px;top:138px;width:12px;height:456px;background:#d3e3fa;background-image:repeating-conic-gradient(#a9d0ff 0 25%,#efefef 0 50%);background-size:2px 2px"></div>
<div style="left:639px;top:588px;width:8px;height:6px;background:#e8e4f2"></div>
<div style="left:656px;top:63px;width:1px;height:531px;background:#e2e2e2"></div>
<div style="left:1339px;top:63px;width:13px;height:531px;background:#f0f0f0"></div>
<div style="left:1341px;top:91px;width:9px;height:5px;background:#fdf0b8;border:1px solid #f3cf5b"></div>
<svg style="left:646px;top:65px" width="11" height="11" viewBox="0 0 11 11"><circle cx="5.5" cy="5.5" r="4.2" fill="#d9e8f8" stroke="#8592aa" stroke-width=".9"/><path d="M3 5.5 H8 M5.5 3 V8" stroke="#0c1424" stroke-width="1"/></svg>
<svg style="left:646px;top:110px" width="11" height="11" viewBox="0 0 11 11"><circle cx="5.5" cy="5.5" r="4.2" fill="#d9e8f8" stroke="#8592aa" stroke-width=".9"/><path d="M3 5.5 H8 M5.5 3 V8" stroke="#0c1424" stroke-width="1"/></svg>
<svg style="left:646px;top:140px" width="11" height="11" viewBox="0 0 11 11"><circle cx="5.5" cy="5.5" r="4.2" fill="#f2f5f9" stroke="#a7afbb" stroke-width=".9"/><path d="M3 5.5 H8" stroke="#8a929e" stroke-width="1"/></svg>
<svg style="left:646px;top:260px" width="11" height="11" viewBox="0 0 11 11"><circle cx="5.5" cy="5.5" r="4.2" fill="#f2f5f9" stroke="#a7afbb" stroke-width=".9"/><path d="M3 5.5 H8" stroke="#8a929e" stroke-width="1"/></svg>
<svg style="left:646px;top:305px" width="11" height="11" viewBox="0 0 11 11"><circle cx="5.5" cy="5.5" r="4.2" fill="#f2f5f9" stroke="#a7afbb" stroke-width=".9"/><path d="M3 5.5 H8" stroke="#8a929e" stroke-width="1"/></svg>
<svg style="left:646px;top:380px" width="11" height="11" viewBox="0 0 11 11"><circle cx="5.5" cy="5.5" r="4.2" fill="#f2f5f9" stroke="#a7afbb" stroke-width=".9"/><path d="M3 5.5 H8" stroke="#8a929e" stroke-width="1"/></svg>
<svg style="left:646px;top:425px" width="11" height="11" viewBox="0 0 11 11"><circle cx="5.5" cy="5.5" r="4.2" fill="#f2f5f9" stroke="#a7afbb" stroke-width=".9"/><path d="M3 5.5 H8" stroke="#8a929e" stroke-width="1"/></svg>
<svg style="left:646px;top:485px" width="11" height="11" viewBox="0 0 11 11"><circle cx="5.5" cy="5.5" r="4.2" fill="#f2f5f9" stroke="#a7afbb" stroke-width=".9"/><path d="M3 5.5 H8" stroke="#8a929e" stroke-width="1"/></svg>
<svg style="left:626px;top:109px" width="15" height="14" viewBox="0 0 15 14"><path d="M4 8.4 Q1.2 6.6 1.2 4.4 Q1.2 1 4.8 1 Q8.4 1 8.4 4.4 Q8.4 6.6 6 8.4 Z" fill="#fdf0b0" stroke="#e8a820" stroke-width="1.1"/><path d="M3.8 9 V11 Q3.8 12.4 5 12.4 Q6 12.4 6 11 V9" fill="#e8eef8" stroke="#4a6ab0" stroke-width=".9"/><path d="M9.6 5.6 L13.6 12.8 H5.6 Z" fill="#fbd56a" stroke="#e08a10" stroke-width=".9" stroke-linejoin="round"/><path d="M9.6 7.8 V10.4" stroke="#3a2400" stroke-width="1.2"/><circle cx="9.6" cy="11.6" r=".7" fill="#3a2400"/></svg>
<div class="code" style="top:63px"><span class="c">/**</span><span style="display:inline-block;box-sizing:border-box;width:8px;height:13px;border:1px solid #858585;vertical-align:-1.5px;margin-left:0;font-size:7px;line-height:17px;letter-spacing:0;color:#444;text-align:center;overflow:hidden;font-family:'DejaVu Sans','Liberation Sans',sans-serif">..</span></div>
<div class="code" style="top:78px"><span class="k">package</span> busPk;</div>
<div class="code" style="top:108px"><span class="k">import</span> <span class="k">static</span> org.junit.Assert.*;<span style="display:inline-block;box-sizing:border-box;width:8px;height:13px;border:1px solid #858585;vertical-align:-1.5px;margin-left:0;font-size:7px;line-height:17px;letter-spacing:0;color:#444;text-align:center;overflow:hidden;font-family:'DejaVu Sans','Liberation Sans',sans-serif">..</span></div>
<div class="code" style="top:138px"><span class="c">/**</span></div>
<div class="code" style="top:153px"><span class="c"> * </span><span class="g">@author</span><span class="c"> blay</span></div>
<div class="code" style="top:168px"><span class="c"> *</span></div>
<div class="code" style="top:183px"><span class="c"> */</span></div>
<div class="code" style="top:198px"><span class="k">public</span> <span class="k">class</span> MessageTest {</div>
<div class="code" style="top:228px">    <span class="k">protected</span> Message <span class="f">mToTest</span>;</div>
<div class="code" style="top:243px">    <span class="k">protected</span> String <span class="f">content</span> = <span class="s">"mon message"</span>;</div>
<div class="code" style="top:258px">    <span class="c">/**</span></div>
<div class="code" style="top:273px">    <span class="c"> * </span><span class="g">@throws</span><span class="c"> java.lang.Exception</span></div>
<div class="code" style="top:288px">    <span class="c"> */</span></div>
<div class="code" style="top:303px">    <span class="a">@Before</span></div>
<div class="code" style="top:318px">    <span class="k">public</span> <span class="k">void</span> setUp() <span class="k">throws</span> Exception {</div>
<div class="code" style="top:333px">        <span class="f">mToTest</span> = <span class="k">new</span> Message(<span class="f">content</span>);</div>
<div class="code" style="top:348px">    }</div>
<div class="code" style="top:378px">    <span class="c">/**</span></div>
<div class="code" style="top:393px">    <span class="c"> * </span><span class="g">@throws</span><span class="c"> java.lang.Exception</span></div>
<div class="code" style="top:408px">    <span class="c"> */</span></div>
<div class="code" style="top:423px">    <span class="a">@After</span></div>
<div class="code" style="top:438px">    <span class="k">public</span> <span class="k">void</span> tearDown() <span class="k">throws</span> Exception {</div>
<div class="code" style="top:453px">    }</div>
<div class="code" style="top:483px">    <span class="a">@Test</span></div>
<div class="code" style="top:498px">       <span class="k">public</span> <span class="k">void</span> testGetContent() <span class="k">throws</span> Exception {</div>
<div class="code" style="top:513px">          <span class="i">assertEquals</span>(<span class="f">content</span>,</div>
<div class="code" style="top:528px">                  <span class="f">mToTest</span>.getContent());</div>
<div class="code" style="top:543px">       }</div>
<div style="left:736px;top:165px;width:28px;height:2px;background:repeating-linear-gradient(to right,#f3661c 0,#f3661c 3px,transparent 3px,transparent 4px);border-radius:1px"></div>
<!-- right trim -->
<div style="left:1364px;top:35px;width:20px;height:58px;background:#e8e8e8;border:1px solid #b2b2b2;border-radius:4px;box-shadow:inset 1px 1px 0 #fafafa"></div>
<div style="left:1364px;top:95px;width:20px;height:142px;background:#e8e8e8;border:1px solid #b2b2b2;border-radius:4px;box-shadow:inset 1px 1px 0 #fafafa"></div>
<div style="left:1371px;top:42px;width:3px;height:1px;background:#8a8066"></div>
<div style="left:1371px;top:101px;width:3px;height:1px;background:#8a8066"></div>
<div style="left:1372px;top:133px;width:2px;height:9px;background:#7a6a40"></div>
<div style="left:1371px;top:140px;width:3px;height:3px;background:#e0a030;border-radius:2px"></div>
<div style="left:1372px;top:172px;width:2px;height:15px;background:#c8a040"></div>
<div style="left:1372px;top:219px;width:2px;height:13px;background:#444"></div>

</body></html>
